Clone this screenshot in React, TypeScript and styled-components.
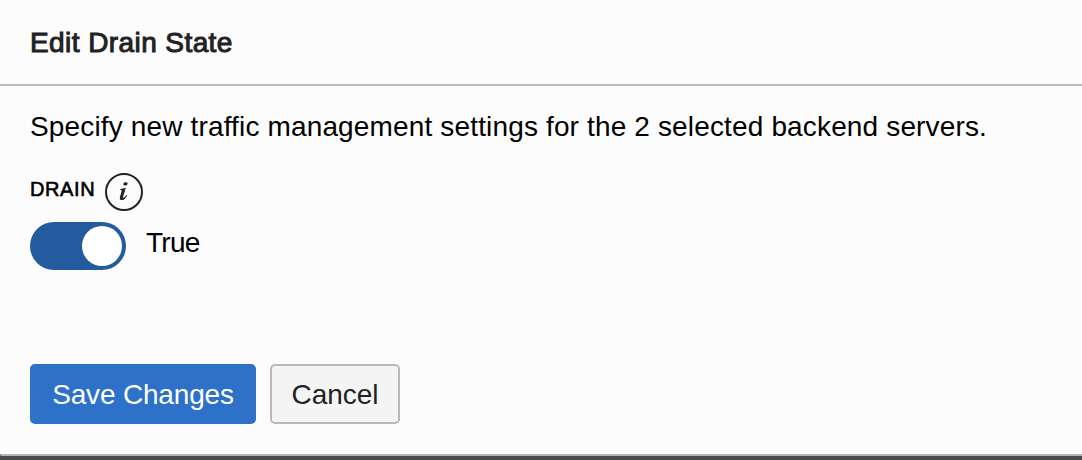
import React, { useState } from "react";
import styled, { createGlobalStyle } from "styled-components";

const GlobalStyle = createGlobalStyle`
  * { box-sizing: border-box; }
  body {
    margin: 0;
    background: #4a4a4c;
    font-family: "Liberation Sans", Arial, sans-serif;
    font-size: 28px;
    color: #000;
    overflow: hidden;
  }
`;

const Dialog = styled.section`
  height: 456px;
  background: #fcfcfc;
  border-bottom: 2px solid #b1b6bc;
  border-bottom-left-radius: 2px;
  display: flex;
  flex-direction: column;
`;

const Header = styled.header`
  height: 86px;
  padding: 27px 30px 0;
  border-bottom: 2px solid #b6b9c0;
`;

const Title = styled.h1`
  margin: 0;
  font-size: 28px;
  line-height: 32px;
  font-weight: 400;
  letter-spacing: 0.42px;
  color: #222;
  -webkit-text-stroke: 1px #222;
`;

const Body = styled.div`
  flex: 1;
  padding: 25px 30px 0;
`;

const Description = styled.p`
  margin: 0;
  line-height: 32px;
  letter-spacing: 0.15px;
  white-space: nowrap;
`;

const FieldLabel = styled.div`
  display: flex;
  align-items: flex-start;
  gap: 10px;
  margin-top: 30px;
  height: 38px;
`;

const LabelText = styled.span`
  width: 65px;
  padding-top: 4px;
  font-size: 20px;
  line-height: 24px;
  letter-spacing: 0.6px;
  white-space: nowrap;
  -webkit-text-stroke: 0.6px #000;
`;

const ToggleRow = styled.div`
  display: flex;
  gap: 20px;
  margin-top: 11px;
`;

const Switch = styled.button<{ $on: boolean }>`
  display: flex;
  align-items: center;
  justify-content: ${(p) => (p.$on ? "flex-end" : "flex-start")};
  width: 96px;
  height: 48px;
  padding: 4px;
  border: 0;
  border-radius: 24px;
  background: ${(p) => (p.$on ? "#225c9f" : "#8b8f96")};
`;

const Knob = styled.span`
  width: 40px;
  height: 40px;
  border-radius: 50%;
  background: #fff;
`;

const ToggleValue = styled.span`
  padding-top: 5px;
  line-height: 32px;
  letter-spacing: -0.75px;
`;

const Footer = styled.footer`
  display: flex;
  gap: 14px;
  padding: 0 30px 30px;
`;

const Button = styled.button<{ $primary?: boolean }>`
  width: ${(p) => (p.$primary ? 226 : 130)}px;
  height: 60px;
  padding: 1px 0 0;
  border: 2px solid ${(p) => (p.$primary ? "#2d71c9" : "#b6b9c0")};
  border-radius: 5px;
  background: ${(p) => (p.$primary ? "#2d71c9" : "#f4f4f4")};
  color: ${(p) => (p.$primary ? "#fff" : "#222")};
  font: inherit;
  letter-spacing: ${(p) => (p.$primary ? -0.17 : -0.05)}px;
  white-space: nowrap;
`;

const InfoIcon = () => (
  <svg width="38" height="38" viewBox="0 0 38 38" fill="none" aria-label="Info">
    <circle cx="19" cy="19" r="18" stroke="#222" strokeWidth="2" />
    <ellipse cx="20.5" cy="10.9" rx="2.2" ry="1.6" transform="rotate(-15 20.5 10.9)" fill="#222" />
    <path
      d="M15.4 16C17.2 15.9 18.8 15.5 20.8 14.8L18.1 23.8C17.7 25.4 18.9 25.2 21.5 21.9L22.2 22.4C20.7 25.4 18.6 27.1 16.8 27.1C14.8 27.1 14.5 25.5 15.1 23.4L16.8 17.3L15.2 17Z"
      fill="#222"
    />
  </svg>
);

export default function App() {
  const [drain, setDrain] = useState(true);
  return (
    <>
      <GlobalStyle />
      <Dialog>
        <Header>
          <Title>Edit Drain State</Title>
        </Header>
        <Body>
          <Description>
            Specify new traffic management settings for the 2 selected backend servers.
          </Description>
          <FieldLabel>
            <LabelText>DRAIN</LabelText>
            <InfoIcon />
          </FieldLabel>
          <ToggleRow>
            <Switch $on={drain} role="switch" aria-checked={drain} onClick={() => setDrain(!drain)}>
              <Knob />
            </Switch>
            <ToggleValue>{drain ? "True" : "False"}</ToggleValue>
          </ToggleRow>
        </Body>
        <Footer>
          <Button $primary>Save Changes</Button>
          <Button>Cancel</Button>
        </Footer>
      </Dialog>
    </>
  );
}
